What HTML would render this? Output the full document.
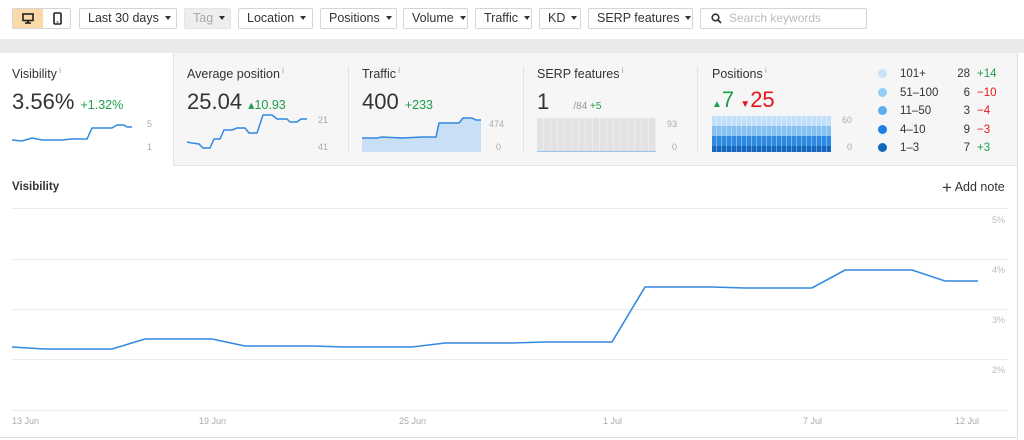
<!DOCTYPE html>
<html><head><meta charset="utf-8"><style>
*{box-sizing:border-box;margin:0;padding:0}
body{width:1024px;height:440px;background:#fff;font-family:"Liberation Sans",sans-serif;position:relative;overflow:hidden;color:#333}
.a{position:absolute}
.btn{position:absolute;top:8px;height:21px;border:1px solid #d5d5d5;border-radius:2px;background:#fff;font-size:12.5px;line-height:19px;padding:0 8px;color:#333;white-space:nowrap}
.btn:after{content:"";display:inline-block;margin-left:6px;border-left:3.5px solid transparent;border-right:3.5px solid transparent;border-top:4px solid #333;vertical-align:2px}
.lbl{font-size:12.5px;color:#333}
.lbl sup{font-size:8px;color:#999}
.big{font-size:22px;color:#333}
.g{color:#1e9e4a}.r{color:#e5161b}
.ax{font-size:9px;color:#aaa}
.gl{position:absolute;left:12px;width:996px;height:1px;background:#ececec}
.yl{position:absolute;left:992px;font-size:9px;color:#bbb}
.xl{position:absolute;top:416px;font-size:9px;color:#aaa}
</style></head><body>
<!-- toolbar -->
<div class="a" style="left:12px;top:8px;width:59px;height:21px;border:1px solid #d5d5d5;border-radius:2px;overflow:hidden">
 <div class="a" style="left:0;top:0;width:30px;height:19px;background:#fcd9a9"></div>
 <svg class="a" style="left:9px;top:4px" width="12" height="11"><rect x="1" y="1" width="10" height="6.5" fill="none" stroke="#222" stroke-width="1.6"/><rect x="5" y="7.5" width="2" height="2" fill="#222"/><rect x="3" y="9.3" width="6" height="1.5" fill="#222"/></svg>
 <svg class="a" style="left:40px;top:3px" width="9" height="13"><rect x="1" y="1" width="7" height="11" rx="1" fill="none" stroke="#222" stroke-width="1.6"/><rect x="3.5" y="9.5" width="2" height="1" fill="#222"/></svg>
</div>
<div class="btn" style="left:79px;width:98px">Last 30 days</div>
<div class="btn" style="left:184px;width:47px;background:#eee;color:#aaa;border-color:#e4e4e4">Tag</div>
<div class="btn" style="left:238px;width:75px">Location</div>
<div class="btn" style="left:320px;width:77px">Positions</div>
<div class="btn" style="left:403px;width:65px">Volume</div>
<div class="btn" style="left:475px;width:57px">Traffic</div>
<div class="btn" style="left:539px;width:42px">KD</div>
<div class="btn" style="left:588px;width:105px">SERP features</div>
<div class="a" style="left:700px;top:8px;width:167px;height:21px;border:1px solid #d5d5d5;border-radius:2px;font-size:12px;color:#bbb;line-height:19px;padding-left:28px">Search keywords
 <svg class="a" style="left:10px;top:4px" width="11" height="11"><circle cx="4.5" cy="4.5" r="3.3" fill="none" stroke="#333" stroke-width="1.6"/><line x1="7" y1="7" x2="10" y2="10" stroke="#333" stroke-width="1.8"/></svg></div>
<!-- gray band -->
<div class="a" style="left:0;top:39px;width:1024px;height:14px;background:#e9eaeb"></div>
<div class="a" style="left:173px;top:53px;width:845px;height:113px;background:#f6f6f6;border-left:1px solid #e3e3e3;border-bottom:1px solid #e3e3e3"></div>
<!-- cards -->
<div class="a lbl" style="left:12px;top:66px">Visibility<sup> i</sup></div>
<div class="a big" style="left:12px;top:89px">3.56% <span class="g" style="font-size:12.5px">+1.32%</span></div>
<svg class="a" style="left:12px;top:120px" width="120" height="30"><polyline fill="none" stroke="#3289e0" stroke-width="1.5" points="0,20 10,21 20,18 30,20 40,20 50,20 60,19 75,19 80,8 100,8 105,5 112,5 115,7 120,7"/></svg>
<div class="a ax" style="left:147px;top:119px">5</div><div class="a ax" style="left:147px;top:142px">1</div>

<div class="a lbl" style="left:187px;top:66px">Average position<sup> i</sup></div>
<div class="a big" style="left:187px;top:89px">25.04 <span class="g" style="font-size:12.5px">▴10.93</span></div>
<svg class="a" style="left:187px;top:112px" width="120" height="40"><polyline fill="none" stroke="#3289e0" stroke-width="1.5" points="0,30 5,31 12,32 16,36 23,36 27,27 33,27 37,18 45,18 50,16 58,16 62,21 70,21 76,3 85,3 90,7 100,7 103,10 110,10 114,7 120,7"/></svg>
<div class="a ax" style="left:318px;top:115px">21</div><div class="a ax" style="left:318px;top:142px">41</div>
<div class="a" style="left:348px;top:66px;width:1px;height:86px;background:#e3e3e3"></div>

<div class="a lbl" style="left:362px;top:66px">Traffic<sup> i</sup></div>
<div class="a big" style="left:362px;top:89px">400 <span class="g" style="font-size:12.5px">+233</span></div>
<svg class="a" style="left:362px;top:115px" width="120" height="37"><polygon fill="#c9dff5" points="0,23 15,23 20,22 40,23 60,22 74,22 77,8 97,8 101,3 110,3 114,5 119,5 119,37 0,37"/><polyline fill="none" stroke="#3289e0" stroke-width="1.5" points="0,23 15,23 20,22 40,23 60,22 74,22 77,8 97,8 101,3 110,3 114,5 119,5"/></svg>
<div class="a ax" style="left:489px;top:119px">474</div><div class="a ax" style="left:496px;top:142px">0</div>
<div class="a" style="left:523px;top:66px;width:1px;height:86px;background:#e3e3e3"></div>

<div class="a lbl" style="left:537px;top:66px">SERP features<sup> i</sup></div>
<div class="a big" style="left:537px;top:89px">1 <span style="font-size:10px;color:#999;margin-left:18px">/84 </span><span class="g" style="font-size:10px">+5</span></div>
<div class="a" style="left:537px;top:118px;width:119px;height:34px;background:repeating-linear-gradient(90deg,#e2e2e2 0 6px,#ececec 6px 7px);border-bottom:1px solid #9cc3ec"></div>
<div class="a ax" style="left:667px;top:119px">93</div><div class="a ax" style="left:672px;top:142px">0</div>
<div class="a" style="left:697px;top:66px;width:1px;height:86px;background:#e3e3e3"></div>

<div class="a lbl" style="left:712px;top:66px">Positions<sup> i</sup></div>
<div class="a" style="left:712px;top:87px;font-size:22px"><span class="g"><span style="font-size:10px">▲</span>7</span> <span class="r"><span style="font-size:10px">▼</span>25</span></div>
<div class="a" style="left:712px;top:116px;width:119px;height:36px;background:linear-gradient(#c2e0fa 0 10px,#86c1f2 10px 20px,#2f8ae3 20px 30px,#1668bf 30px);"></div>
<div class="a" style="left:712px;top:116px;width:119px;height:36px;background:repeating-linear-gradient(90deg,transparent 0 4px,rgba(255,255,255,.35) 4px 5px)"></div>
<div class="a ax" style="left:842px;top:115px">60</div><div class="a ax" style="left:847px;top:142px">0</div>

<div class="a" style="left:878px;top:65px;font-size:11.5px;line-height:18.5px;color:#333">
<div><span style="display:inline-block;width:9px;height:9px;border-radius:50%;background:#c7e3fb;vertical-align:-1px"></span><span style="display:inline-block;width:42px;margin-left:13px">101+</span><span style="display:inline-block;width:28px;text-align:right">28</span><span class="g" style="margin-left:7px">+14</span></div>
<div><span style="display:inline-block;width:9px;height:9px;border-radius:50%;background:#93ccf6;vertical-align:-1px"></span><span style="display:inline-block;width:42px;margin-left:13px">51–100</span><span style="display:inline-block;width:28px;text-align:right">6</span><span class="r" style="margin-left:7px">−10</span></div>
<div><span style="display:inline-block;width:9px;height:9px;border-radius:50%;background:#5aaeee;vertical-align:-1px"></span><span style="display:inline-block;width:42px;margin-left:13px">11–50</span><span style="display:inline-block;width:28px;text-align:right">3</span><span class="r" style="margin-left:7px">−4</span></div>
<div><span style="display:inline-block;width:9px;height:9px;border-radius:50%;background:#1d7fe0;vertical-align:-1px"></span><span style="display:inline-block;width:42px;margin-left:13px">4–10</span><span style="display:inline-block;width:28px;text-align:right">9</span><span class="r" style="margin-left:7px">−3</span></div>
<div><span style="display:inline-block;width:9px;height:9px;border-radius:50%;background:#0f69b8;vertical-align:-1px"></span><span style="display:inline-block;width:42px;margin-left:13px">1–3</span><span style="display:inline-block;width:28px;text-align:right">7</span><span class="g" style="margin-left:7px">+3</span></div>
</div>

<!-- chart -->
<div class="a" style="left:1017px;top:53px;width:1px;height:387px;background:#ddd"></div>
<div class="a" style="left:0;top:437px;width:1018px;height:1px;background:#ddd"></div>
<div class="a" style="left:12px;top:181px;font-size:11.5px;font-weight:bold;color:#333">Visibility</div>
<div class="a" style="left:942px;top:180px;font-size:12.5px;color:#333"><span style="font-size:17px;line-height:12px;vertical-align:-2px">+</span> Add note</div>
<div class="gl" style="top:208px"></div><div class="gl" style="top:259px"></div><div class="gl" style="top:309px"></div><div class="gl" style="top:359px"></div><div class="gl" style="top:410px"></div>
<div class="yl" style="top:215px">5%</div><div class="yl" style="top:265px">4%</div><div class="yl" style="top:315px">3%</div><div class="yl" style="top:365px">2%</div>
<svg class="a" style="left:0;top:0" width="1024" height="440"><polyline fill="none" stroke="#3289e0" stroke-width="1.6" points="12,347 45,349 112,349 145,339 212,339 245,346 312,346 345,347 412,347 445,343 512,343 545,342 612,342 645,287 712,287 745,288 812,288 845,270 912,270 945,281 978,281"/></svg>
<div class="xl" style="left:12px">13 Jun</div><div class="xl" style="left:199px">19 Jun</div><div class="xl" style="left:399px">25 Jun</div><div class="xl" style="left:603px">1 Jul</div><div class="xl" style="left:803px">7 Jul</div><div class="xl" style="left:955px">12 Jul</div>
</body></html>
